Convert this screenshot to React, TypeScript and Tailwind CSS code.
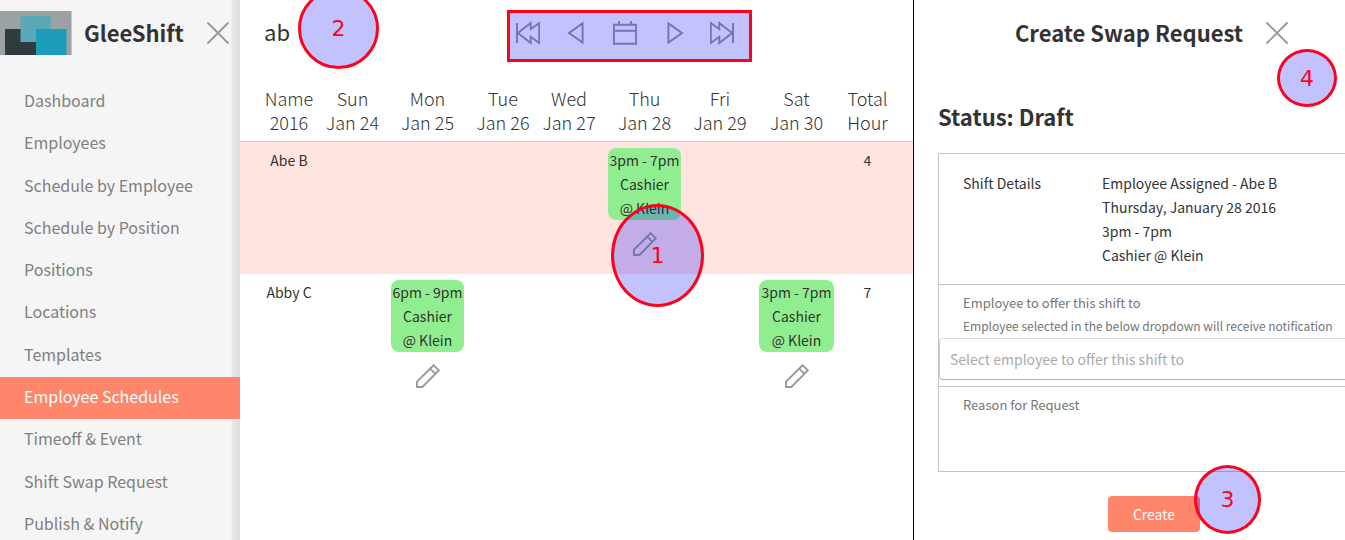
import React from "react";

const navItems = [
  "Dashboard",
  "Employees",
  "Schedule by Employee",
  "Schedule by Position",
  "Positions",
  "Locations",
  "Templates",
  "Employee Schedules",
  "Timeoff & Event",
  "Shift Swap Request",
  "Publish & Notify",
];

type Shift = { time: string; role: string; place: string };
type Row = { name: string; shifts: (Shift | null)[]; total: number; selected?: boolean };

const days: [string, string][] = [
  ["Name", "2016"],
  ["Sun", "Jan 24"],
  ["Mon", "Jan 25"],
  ["Tue", "Jan 26"],
  ["Wed", "Jan 27"],
  ["Thu", "Jan 28"],
  ["Fri", "Jan 29"],
  ["Sat", "Jan 30"],
  ["Total", "Hour"],
];

const evening: Shift = { time: "3pm - 7pm", role: "Cashier", place: "@ Klein" };
const late: Shift = { time: "6pm - 9pm", role: "Cashier", place: "@ Klein" };

const rows: Row[] = [
  { name: "Abe B", shifts: [null, null, null, null, evening, null, null], total: 4, selected: true },
  { name: "Abby C", shifts: [null, late, null, null, null, null, evening], total: 7 },
];

function Icon({ children }: { children: React.ReactNode }) {
  return (
    <svg
      viewBox="0 0 24 24"
      className="size-6 fill-none stroke-[#999]"
      strokeWidth="1.9"
      aria-hidden="true"
    >
      {children}
    </svg>
  );
}

function CloseIcon() {
  return (
    <Icon>
      <path d="M2 2 22 22M22 2 2 22" strokeLinecap="round" />
    </Icon>
  );
}

function PencilIcon() {
  return (
    <Icon>
      <path d="M1 23V17.6L17.6 1.2 22.8 6.4 6.4 23ZM14.2 4.6 19.4 9.8" />
    </Icon>
  );
}

const pager = [
  {
    label: "First week",
    art: <path d="M1 2V22M1.9 12 14.7 2V8.2L23.2 2V22L14.7 15.8V22Z" />,
  },
  { label: "Previous week", art: <path d="M4 12 17.6 2.4V21.6Z" /> },
  {
    label: "Pick a date",
    art: <path d="M.9 3.7H23.1V22.8H.9ZM.9 9.7H23.1M6 0V3.7M18 0V3.7" />,
  },
  { label: "Next week", art: <path d="M20 12 6.4 2.4V21.6Z" /> },
  {
    label: "Last week",
    art: <path d="M23 2V22M22.1 12 9.3 2V8.2L.8 2V22L9.3 15.8V22Z" />,
  },
];

function Sidebar() {
  return (
    <aside className="flex w-60 shrink-0 flex-col bg-[#f5f5f5] bg-[linear-gradient(to_left,#dcdcdc,#e8e8e8_8px,#f5f5f5_9px)]">
      <div className="flex h-[66px] shrink-0 items-center">
        <svg viewBox="0 0 72 44" className="h-11 w-[72px] shrink-0" role="img" aria-label="GleeShift logo">
          <rect width="72" height="44" fill="#9ba2a4" />
          <rect x="71" width="1" height="44" fill="#c4c8c9" />
          <rect x="5" y="18" width="31" height="26" fill="#2e3c3d" />
          <rect x="20.5" y="5" width="30.5" height="26" fill="#5aa8b8" />
          <rect x="36" y="18" width="30.5" height="26" fill="#1e9dba" />
        </svg>
        <h1 className="ml-3 flex-1 pb-[3px] text-[22px] leading-6 font-bold">GleeShift</h1>
        <button type="button" aria-label="Close menu" className="mr-[10px]">
          <CloseIcon />
        </button>
      </div>
      <nav className="pt-[15px]">
        <ul className="grid h-[465px] auto-rows-fr">
          {navItems.map((item) => {
            const active = item === "Employee Schedules";
            return (
              <li key={item} className="flex">
                <a
                  href="#"
                  className={
                    active
                      ? "flex flex-1 items-center bg-[#ff866b] pb-[4px] pl-6 text-[16px] leading-6 text-white"
                      : "flex flex-1 items-center pb-[4px] pl-6 text-[16px] leading-6 text-[#7f7f7f]"
                  }
                >
                  {item}
                </a>
              </li>
            );
          })}
        </ul>
      </nav>
    </aside>
  );
}

function ShiftCard({ shift }: { shift: Shift }) {
  return (
    <div className="flex flex-col items-center">
      <div className="w-full rounded-lg bg-[#90ee90] whitespace-nowrap">
        <p>{shift.time}</p>
        <p>{shift.role}</p>
        <p>{shift.place}</p>
      </div>
      <button type="button" aria-label="Edit shift" className="mt-3">
        <PencilIcon />
      </button>
    </div>
  );
}

function Schedule() {
  return (
    <main className="min-w-0 flex-1 border-r border-black">
      <div className="flex h-[66px] items-center">
        <input
          type="text"
          aria-label="Search employees"
          defaultValue="ab"
          className="ml-6 w-[240px] bg-transparent pb-[4px] text-[22px] leading-8 outline-none"
        />
        <div className="flex w-[242px] justify-between">
          {pager.map((b) => (
            <button key={b.label} type="button" aria-label={b.label} className="flex w-12 justify-center">
              <Icon>{b.art}</Icon>
            </button>
          ))}
        </div>
      </div>
      <table className="mt-5 w-full table-fixed text-center text-[14px] leading-6">
        <colgroup>
          <col className="w-[80px]" />
          <col className="w-[65px]" />
          <col className="w-[85px]" />
          <col className="w-[66px]" />
          <col className="w-[66px]" />
          <col className="w-[85px]" />
          <col className="w-[66px]" />
          <col className="w-[87px]" />
          <col className="w-[73px]" />
        </colgroup>
        <thead>
          <tr className="border-b border-[#ccc]">
            {days.map(([top, bottom]) => (
              <th
                key={bottom}
                scope="col"
                className="pb-[7px] text-[18px] font-light whitespace-nowrap first:pr-[6px] first:pl-6 last:pr-6 last:pl-[6px]"
              >
                {top}
                <br />
                {bottom}
              </th>
            ))}
          </tr>
        </thead>
        <tbody>
          {rows.map((row) => (
            <tr key={row.name} className={row.selected ? "h-[132px] bg-[#ffe4e0] align-top" : "h-[132px] align-top"}>
              <td className="py-[6px] pr-[6px] pl-6 whitespace-nowrap">{row.name}</td>
              {row.shifts.map((shift, i) => (
                <td key={i} className="p-[6px]">
                  {shift && <ShiftCard shift={shift} />}
                </td>
              ))}
              <td className="py-[6px] pr-6 pl-[6px]">{row.total}</td>
            </tr>
          ))}
        </tbody>
      </table>
    </main>
  );
}

function SwapRequest() {
  return (
    <section className="w-[431px] shrink-0 overflow-hidden">
      <div className="w-[480px] px-6">
        <header className="flex h-[66px] items-center justify-center gap-[22px] pr-1">
          <h2 className="pb-[3px] text-[22px] leading-6 font-bold">Create Swap Request</h2>
          <button type="button" aria-label="Close request">
            <CloseIcon />
          </button>
        </header>
        <h3 className="mt-[34px] text-[22px] leading-8 font-bold">Status: Draft</h3>
        <form className="mt-[21px]">
          <div className="border border-[#c4c4c4]">
            <dl className="flex h-[131px] border-b border-[#c4c4c4] px-6 pt-[17px] text-[14px] leading-6">
              <dt className="w-[139px]">Shift Details</dt>
              <dd>
                <p>Employee Assigned - Abe B</p>
                <p>Thursday, January 28 2016</p>
                <p>3pm - 7pm</p>
                <p>Cashier @ Klein</p>
              </dd>
            </dl>
            <div className="border-b border-[#c4c4c4] pt-[6px] pb-[6px]">
              <label htmlFor="offer" className="block px-6 pb-px text-[13px] leading-[23px] text-[#757575]">
                Employee to offer this shift to
                <span className="block text-[12px] whitespace-nowrap">
                  Employee selected in the below dropdown will receive notification
                </span>
              </label>
              <select
                id="offer"
                defaultValue=""
                className="block h-[42px] w-full appearance-none rounded border border-[#ccc] border-t-[#d9d9d9] border-b-[#b3b3b3] bg-white px-[10px] text-[14px] text-[#aaa]"
              >
                <option value="">Select employee to offer this shift to</option>
              </select>
            </div>
            <div className="h-[84px] px-6 pt-[6px]">
              <label htmlFor="reason" className="block text-[13px] leading-[23px] text-[#757575]">
                Reason for Request
              </label>
              <textarea id="reason" className="block h-12 w-full resize-none text-[14px] leading-6 outline-none" />
            </div>
          </div>
          <div className="flex justify-center pt-6">
            <button type="button" className="h-9 min-w-[92px] rounded bg-[#ff866b] px-5 text-[14px] leading-6 text-white">
              Create
            </button>
          </div>
        </form>
      </div>
    </section>
  );
}

const marker =
  "pointer-events-none absolute flex items-center justify-center border-[3px] border-[#ff001f] bg-[#0000ff]/24 font-['DejaVu_Sans',sans-serif] text-[22px] text-[#ff001f]";

export default function App() {
  return (
    <div className="relative flex h-screen overflow-hidden bg-white font-['Noto_Sans_CJK_SC',sans-serif] text-[#333]">
      <Sidebar />
      <Schedule />
      <SwapRequest />
      <div className={`${marker} top-[10px] left-[507px] h-[52px] w-[245px]`} />
      <div className={`${marker} top-[204px] left-[611px] h-[103px] w-[93px] rounded-[50%]`}>1</div>
      <div className={`${marker} top-[-12px] left-[298px] size-[81px] rounded-[50%]`}>2</div>
      <div className={`${marker} top-[465px] left-[1194px] h-[69px] w-[67px] rounded-[50%]`}>3</div>
      <div className={`${marker} top-[49px] left-[1277px] h-[58px] w-[60px] rounded-[50%]`}>4</div>
    </div>
  );
}
